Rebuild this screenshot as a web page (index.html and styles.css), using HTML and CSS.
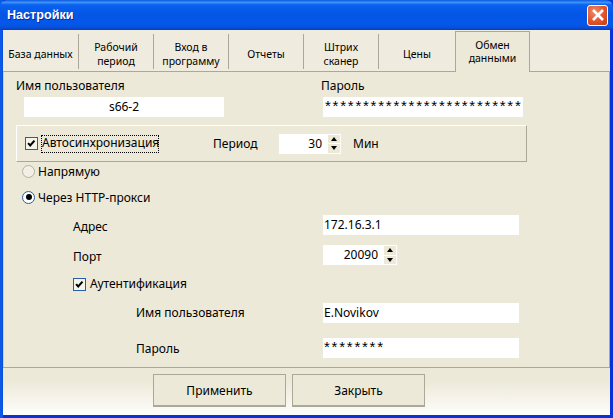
FILE: index.html
```html
<!DOCTYPE html>
<html lang="ru">
<head>
<meta charset="utf-8">
<title>Настройки</title>
<link rel="stylesheet" href="styles.css">
</head>
<body>
<div class="window">
  <header class="titlebar">
    <span class="title">Настройки</span>
    <span class="close"><svg viewBox="0 0 14 14" width="14" height="14"><path d="M2 2 L12 12 M12 2 L2 12" stroke="#fff" stroke-width="2.6" fill="none"/></svg></span>
  </header>
  <div class="frame">
    <nav class="tabs">
      <div class="tab w1">База данных</div>
      <div class="tab w2">Рабочий<br>период</div>
      <div class="tab w2">Вход в<br>программу</div>
      <div class="tab w2">Отчеты</div>
      <div class="tab w2">Штрих<br>сканер</div>
      <div class="tab w3">Цены</div>
      <div class="tab active">Обмен<br>данными</div>
    </nav>
    <main class="panel">
      <div class="row labels">
        <span class="col-a">Имя пользователя</span>
        <span class="col-b">Пароль</span>
      </div>
      <div class="row creds">
        <div class="input user">s66-2</div>
        <div class="input pass">**************************</div>
      </div>
      <section class="group">
        <span class="check"><svg viewBox="0 0 13 13" width="11" height="11"><path d="M2.5 6 L5 8.8 L10 3" stroke="#000" stroke-width="2.4" fill="none"/></svg></span>
        <span class="focus">Автосинхронизация</span>
        <span class="period">Период</span>
        <div class="input spin period-in"><span class="val">30</span>
          <span class="arrows"><i class="up"></i><i class="down"></i></span>
        </div>
        <span class="min">Мин</span>
      </section>
      <div class="row radio r1"><span class="rd"></span><span class="rtext">Напрямую</span></div>
      <div class="row radio r2"><span class="rd on"><b></b></span><span class="rtext">Через HTTP-прокси</span></div>
      <div class="row field f1"><span class="lab1">Адрес</span><div class="input wide">172.16.3.1</div></div>
      <div class="row field f2"><span class="lab1">Порт</span>
        <div class="input spin port"><span class="val">20090</span>
          <span class="arrows"><i class="up"></i><i class="down"></i></span>
        </div>
      </div>
      <div class="row auth"><span class="check"><svg viewBox="0 0 13 13" width="11" height="11"><path d="M2.5 6 L5 8.8 L10 3" stroke="#000" stroke-width="2.4" fill="none"/></svg></span><span>Аутентификация</span></div>
      <div class="row field f3"><span class="lab2">Имя пользователя</span><div class="input wide">E.Novikov</div></div>
      <div class="row field f4"><span class="lab2 low">Пароль</span><div class="input wide stars">********</div></div>
    </main>
    <footer class="footer">
      <button class="btn">Применить</button>
      <button class="btn">Закрыть</button>
    </footer>
  </div>
</div>
</body>
</html>
```
FILE: styles.css
```css
* { box-sizing: border-box; }
html, body { margin: 0; padding: 0; }
body {
  width: 613px; height: 418px; overflow: hidden;
  font-family: "Noto Sans", "Liberation Sans", sans-serif;
  font-size: 12px; line-height: 14px; color: #000;
  background: #0019b0;
}
.window {
  width: 613px; height: 418px; display: flex; flex-direction: column;
  background: linear-gradient(90deg, #0a5ae8 0, #0a5ae8 3px, #0831d9 3px, #0831d9 100%);
}
.titlebar {
  height: 30px; flex: none; display: flex; align-items: center; justify-content: space-between;
  padding: 0 5px 0 7px;
  border-radius: 7px 7px 0 0;
  background: linear-gradient(180deg, #0a5ae0 0%, #3f92fb 8%, #0a62ef 16%, #0355e6 50%, #0358ea 80%, #0a4fd6 92%, #003ec2 100%);
}
.title {
  font-family: "Liberation Sans", sans-serif; font-weight: 700; font-size: 12.6px;
  color: #fff; text-shadow: 1px 1px 0 #0a2a9a;
}
.close {
  width: 21px; height: 21px; display: flex; align-items: center; justify-content: center;
  border: 1px solid #fff; border-radius: 3px;
  background: radial-gradient(circle at 35% 30%, #ef8a6c 0%, #e2582f 50%, #c63a10 100%);
}
.frame {
  flex: 1; display: flex; flex-direction: column; min-height: 0;
  margin: 0 3px 3px 2px; background: #ece9d8;
  border-left: 1px solid #0a50dc;
}
.tabs {
  height: 42px; flex: none; display: flex; align-items: stretch;
  background: #efecdf; border-bottom: 1px solid #aca899; padding-top: 1px;
  font-size: 10.5px;
}
.tab {
  display: flex; align-items: center; justify-content: center; text-align: center;
  margin-top: 3px; margin-bottom: 1px; height: 35px; padding-top: 4px;
  border-right: 1px solid #aca899;
}
.tab.w1 { width: 76px; }
.tab.w2 { width: 75px; }
.tab.w3 { width: 76px; border-right: 0; }
.tab.active {
  width: 75px; height: 41px; margin-top: 0; margin-bottom: -1px; padding-top: 0;
  line-height: 13px;
  background: #ece9d8; border: 1px solid #aca899; border-bottom: 0;
}
.panel {
  flex: 1; min-height: 0; display: flex; flex-direction: column;
  border-bottom: 1px solid #aca899; background: #ece9d8; padding-top: 7px;
  box-shadow: inset 1px 0 #d4d0c0, inset -1px 0 #aca899;
}
.row { display: flex; align-items: center; }
.labels { height: 14px; }
.col-a { width: 318px; padding-left: 13px; }
.col-b { flex: 1; }
.creds { margin-top: 4px; height: 20px; }
.input { height: 20px; background: #fff; display: flex; align-items: center; padding: 0 1px; white-space: nowrap; }
.user { width: 200px; margin-left: 21px; margin-right: 99px; justify-content: center; }
.pass, .stars {
  overflow: hidden; letter-spacing: 1.76px;
  font-family: "Liberation Sans", sans-serif; font-size: 15px;
  padding-left: 2px; padding-bottom: 2px;
}
.pass { width: 200px; }
.group {
  margin: 8px 0 0 13px; width: 511px; height: 37px; display: flex; align-items: center;
  border: 1px solid; border-color: #fff #aca899 #aca899 #fff;
  padding-left: 8px;
}
.check {
  width: 13px; height: 13px; flex: none; background: #f4f3ec; border: 1px solid #2b5ca6;
  display: flex; align-items: center; justify-content: center;
}
.focus { margin-left: 3px; width: 118px; height: 18px; line-height: 16px; outline: 1px dotted #000; outline-offset: -1px; padding-left: 1px; }
.period { margin-left: 54px; width: 66px; }
.spin { justify-content: flex-end; padding-right: 1px; }
.period-in { width: 62px; }
.val { padding-right: 6px; }
.arrows { display: flex; flex-direction: column; gap: 1px; width: 12px; height: 18px; flex: none; }
.arrows i { flex: 1; background: #ece9d8; display: flex; align-items: center; justify-content: center; }
.arrows i::before { content: ""; border-left: 3.5px solid transparent; border-right: 3.5px solid transparent; }
.up::before { border-bottom: 4px solid #000; }
.down::before { border-top: 4px solid #000; }
.min { margin-left: 12px; }
.radio { height: 14px; padding-left: 19px; gap: 3px; }
.rtext { padding-top: 2px; }
.r1 { margin-top: 2px; }
.r2 { margin-top: 12px; }
.rd {
  width: 13px; height: 13px; border-radius: 50%; border: 1px solid #b5b2a3; background: #f1efe6;
  display: flex; align-items: center; justify-content: center;
}
.rd.on { border-color: #2b5ca6; background: #fff; }
.rd b { width: 6px; height: 6px; border-radius: 50%; background: #000; }
.field { height: 20px; }
.lab1 { width: 250px; margin-left: 70px; padding-top: 4px; }
.lab2 { width: 187px; margin-left: 133px; }
.low { padding-top: 2px; }
.wide { width: 196px; padding-left: 1px; }
.port { width: 74px; }
.f1 { margin-top: 11px; }
.f2 { margin-top: 10px; }
.auth { margin-top: 12px; margin-left: 70px; gap: 4px; height: 14px; }
.f3 { margin-top: 12px; }
.f4 { margin-top: 15px; }
.footer {
  height: 47px; flex: none; display: flex; gap: 6px; padding: 6px 0 0 150px;
  background: linear-gradient(180deg, #ece9d8 0%, #ece9d8 25%, #fdfdfb 100%);
}
.btn {
  width: 133px; height: 33px; font: inherit; color: #000; background: #ece9d8;
  border: 1px solid #aca899; border-bottom-width: 2px; padding: 2px 0 0;
}
```
